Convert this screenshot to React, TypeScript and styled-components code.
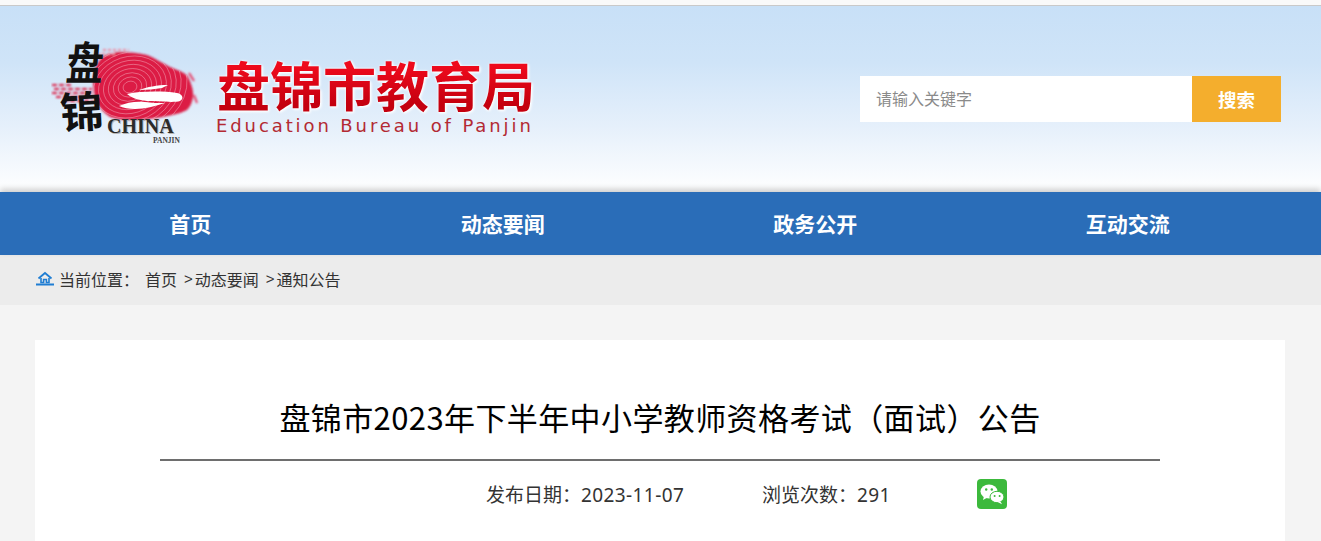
import React from "react";
import styled, { createGlobalStyle } from "styled-components";

const NAV_ITEMS = ["首页", "动态要闻", "政务公开", "互动交流"];
const RIDGE_RADII = [7, 12, 17, 22, 27, 32, 37, 42, 47, 52, 58];
const BLOB =
  "M51 14c6-3 12-5 18-5 9 0 19 1 27 3 8 3 15 8 23 12 7 3 15 5 18 10 3 6 6 14 5 20-1 6-3 10-6 13-7 4-16 5-24 7-11 2-22 3-33 3-7 0-14-1-20-3-6-4-10-9-13-14-3-7-4-15-4-23 1-9 4-18 9-23z";

const Logo = () => (
  <svg width="150" height="126" viewBox="0 -20 150 126" aria-label="盘锦 CHINA PANJIN">
    <defs>
      <filter id="soft" x="-10%" y="-10%" width="120%" height="120%">
        <feGaussianBlur stdDeviation="0.9" />
      </filter>
      <filter id="softer" x="-10%" y="-10%" width="120%" height="120%">
        <feGaussianBlur stdDeviation="0.5" />
      </filter>
      <clipPath id="blob">
        <path d={BLOB} />
      </clipPath>
    </defs>
    <g filter="url(#soft)">
      <path d={BLOB} fill="#dc1c44" />
      <path d="M1 42h20M3 46h38M1 50h40M5 54h36M12 58h30" stroke="#dc1c44" strokeWidth="2.2" strokeDasharray="5 2" />
      <path d="M52 7h26M46 11h20" stroke="#f0869e" strokeWidth="1.8" strokeDasharray="3 2" />
      <path d="M138 30l5 8M143 52l3 8" stroke="#e63a62" strokeWidth="2" />
    </g>
    <g clipPath="url(#blob)" fill="none" stroke="#fbd5dd" strokeOpacity="0.4" strokeWidth="0.9" filter="url(#softer)">
      {RIDGE_RADII.map((r) => (
        <ellipse key={r} cx="79" cy="44" rx={r} ry={r * 0.82} transform="rotate(-18 79 44)" />
      ))}
    </g>
    <g fill="#fff" filter="url(#softer)">
      <path d="M88 47c8-3 18-5 29-5l-6 3c-7 1-15 2-23 2z" />
      <path d="M76 51c14-3 36-3 50-1 6 1 7 6 3 8-6 2-22 0-30 0-8 0-17-2-23-7z" />
      <path d="M68 63c8-4 18-5 26-4 6 1 14 1 20 1-10 3-20 6-30 6-6 0-12-1-16-3z" />
    </g>
    <InkGlyph transform="translate(14 37) scale(0.98 1.2) skewX(-6)" fontSize="38">
      盘
    </InkGlyph>
    <InkGlyph transform="translate(10 86) rotate(-3)" fontSize="43">
      锦
    </InkGlyph>
    <ChinaShadow x="57" y="91">CHINA</ChinaShadow>
    <ChinaMark x="56" y="90">CHINA</ChinaMark>
    <PanjinMark x="102" y="100">PANJIN</PanjinMark>
  </svg>
);

const WeChatIcon = () => (
  <svg width="30" height="30" viewBox="0 0 30 30">
    <rect width="30" height="30" rx="4" fill="#3cb93c" />
    <ellipse cx="12" cy="12.5" rx="8.5" ry="7" fill="#fff" />
    <path d="M7 17l-1 4 4.5-2.5z" fill="#fff" />
    <ellipse cx="20" cy="18" rx="7" ry="5.7" fill="#fff" stroke="#3cb93c" strokeWidth="1" />
    <path d="M23.5 22.5l1.5 2.8-4.5-2.3z" fill="#fff" />
    <circle cx="9.2" cy="10.5" r="1.2" fill="#3cb93c" />
    <circle cx="14.8" cy="10.5" r="1.2" fill="#3cb93c" />
    <circle cx="17.6" cy="17" r="1" fill="#3cb93c" />
    <circle cx="22.6" cy="17" r="1" fill="#3cb93c" />
  </svg>
);

const HomeIcon = () => (
  <svg width="18" height="15" viewBox="0 0 18 15" fill="none" stroke="#1f7dd3">
    <path d="M2.5 7.5L9 2l6.5 5.5" strokeWidth="1.8" />
    <path d="M5 7v4.5h2.6V8.5h2.8v3H13V7" strokeWidth="1.6" />
    <path d="M0 13.5h18" strokeWidth="2" />
  </svg>
);

export default function App() {
  return (
    <Page>
      <GlobalStyle />
      <Header>
        <Brand>
          <Logo />
          <BrandText>
            <BrandName>盘锦市教育局</BrandName>
            <BrandEnglish>Education Bureau of Panjin</BrandEnglish>
          </BrandText>
        </Brand>
        <SearchBox>
          <SearchInput placeholder="请输入关键字" />
          <SearchButton>搜索</SearchButton>
        </SearchBox>
      </Header>
      <Nav>
        {NAV_ITEMS.map((item) => (
          <NavItem key={item}>{item}</NavItem>
        ))}
      </Nav>
      <Crumbs>
        <HomeIcon />
        <CrumbLabel>当前位置：</CrumbLabel>
        <CrumbHome>首页</CrumbHome>
        <CrumbSep>&gt;</CrumbSep>
        <span>动态要闻</span>
        <CrumbSep>&gt;</CrumbSep>
        <span>通知公告</span>
      </Crumbs>
      <Main>
        <Article>
          <Title>盘锦市2023年下半年中小学教师资格考试（面试）公告</Title>
          <Meta>
            <MetaDate>发布日期：<MetaValue>2023-11-07</MetaValue></MetaDate>
            <MetaViews>浏览次数：<MetaValue>291</MetaValue></MetaViews>
            <WeChatIcon />
          </Meta>
        </Article>
      </Main>
    </Page>
  );
}

const GlobalStyle = createGlobalStyle`
  html, body {
    margin: 0;
    padding: 0;
    height: 100%;
    overflow: hidden;
    background: #f4f4f4;
  }
  body {
    font-family: "Liberation Sans", "Noto Sans CJK SC", sans-serif;
  }
`;

const Page = styled.div`
  width: 1321px;
  height: 541px;
  overflow: hidden;
  background: #f4f4f4;
`;

const Header = styled.header`
  box-sizing: border-box;
  height: 192px;
  padding: 6px 40px 0 51px;
  border-top: 5px solid #f9f9f9;
  background: linear-gradient(#c8e0f7 0%, #cfe4f8 30%, #e6f0fb 65%, #ffffff 100%) 0 1px no-repeat;
  box-shadow: inset 0 1px 0 #c9c9c9;
  display: flex;
  align-items: flex-start;
  justify-content: space-between;
`;

const Brand = styled.div`
  display: flex;
  align-items: flex-start;
  margin-top: 12px;
`;

const BrandText = styled.div`
  display: flex;
  flex-direction: column;
  margin-left: 15px;
  margin-top: 32px;
`;

const BrandName = styled.div`
  font-family: "Noto Sans CJK SC", sans-serif;
  font-size: 53px;
  line-height: 58px;
  font-weight: 700;
  margin-left: 1px;
  white-space: nowrap;
  color: transparent;
  background: linear-gradient(#ee0a1c 20%, #c4000f 85%);
  -webkit-background-clip: text;
  background-clip: text;
  filter: drop-shadow(0 0 1px #fff) drop-shadow(1px 1px 1px #fff);
`;

const BrandEnglish = styled.div`
  margin-top: 2px;
  font-family: "DejaVu Sans", sans-serif;
  font-size: 18px;
  line-height: 22px;
  letter-spacing: 2.9px;
  color: #b32a33;
  white-space: nowrap;
`;

const SearchBox = styled.div`
  display: flex;
  width: 421px;
  height: 46px;
  margin-top: 65px;
`;

const SearchInput = styled.input`
  box-sizing: border-box;
  flex: 1;
  min-width: 0;
  height: 46px;
  padding: 1px 16px 0;
  border: none;
  outline: none;
  background: #fff;
  font-family: "Liberation Sans", "Noto Sans CJK SC", sans-serif;
  font-size: 16px;

  &::placeholder {
    color: #8a8a8a;
    opacity: 1;
  }
`;

const SearchButton = styled.button`
  width: 89px;
  height: 46px;
  border: none;
  padding: 0;
  background: #f4ae2d;
  color: #fff;
  font-family: "Noto Sans CJK SC", sans-serif;
  font-size: 18.5px;
  font-weight: 700;
`;

const Nav = styled.nav`
  display: grid;
  grid-template-columns: repeat(4, 312.5px);
  justify-content: start;
  padding-left: 34px;
  height: 63px;
  background: #2a6db8;
  box-shadow: 0 -3px 6px rgba(0, 0, 0, 0.2);
  position: relative;
`;

const NavItem = styled.div`
  text-align: center;
  font-family: "Noto Sans CJK SC", sans-serif;
  font-size: 21px;
  font-weight: 700;
  line-height: 62px;
  color: #fff;
`;

const Crumbs = styled.div`
  box-sizing: border-box;
  display: flex;
  align-items: center;
  height: 50px;
  padding: 0 0 3px 36px;
  background: #ececec;
  color: #333;
  font-size: 16px;
`;

const CrumbLabel = styled.span`
  margin-left: 5px;
`;

const CrumbHome = styled.span`
  margin-left: 6px;
`;

const CrumbSep = styled.span`
  margin: 0 2px 0 7px;
  font-size: 15px;
`;

const Main = styled.main`
  padding: 35px 36px 0 35px;
`;

const Article = styled.article`
  height: 240px;
  padding: 51px 125px 0;
  background: #fff;
`;

const Title = styled.h1`
  margin: 0;
  padding-bottom: 16px;
  border-bottom: 2px solid #6e6e6e;
  text-align: center;
  font-family: "Noto Sans CJK SC", sans-serif;
  font-size: 31px;
  line-height: 52px;
  letter-spacing: 0.4px;
  font-weight: 400;
  color: #000;
`;

const Meta = styled.div`
  display: flex;
  align-items: center;
  height: 30px;
  margin-top: 18px;
  padding-left: 326px;
  font-family: "Noto Sans CJK SC", sans-serif;
  font-size: 19px;
  color: #333;
`;

const MetaDate = styled.span`
  width: 276px;
`;

const MetaViews = styled.span`
  width: 215px;
`;

const MetaValue = styled.span`
  font-family: "Noto Sans", sans-serif;
  letter-spacing: 0.4px;
`;

const InkGlyph = styled.text`
  font-family: "Noto Sans CJK SC", sans-serif;
  font-weight: 700;
  fill: #111;
`;

const ChinaMark = styled.text`
  font-family: "Liberation Serif", serif;
  font-size: 20px;
  font-weight: 700;
  fill: #2a2a2a;
`;

const ChinaShadow = styled(ChinaMark)`
  fill: #b5b5b5;
`;

const PanjinMark = styled.text`
  font-family: "Liberation Serif", serif;
  font-size: 7.5px;
  font-weight: 700;
  fill: #444;
`;
